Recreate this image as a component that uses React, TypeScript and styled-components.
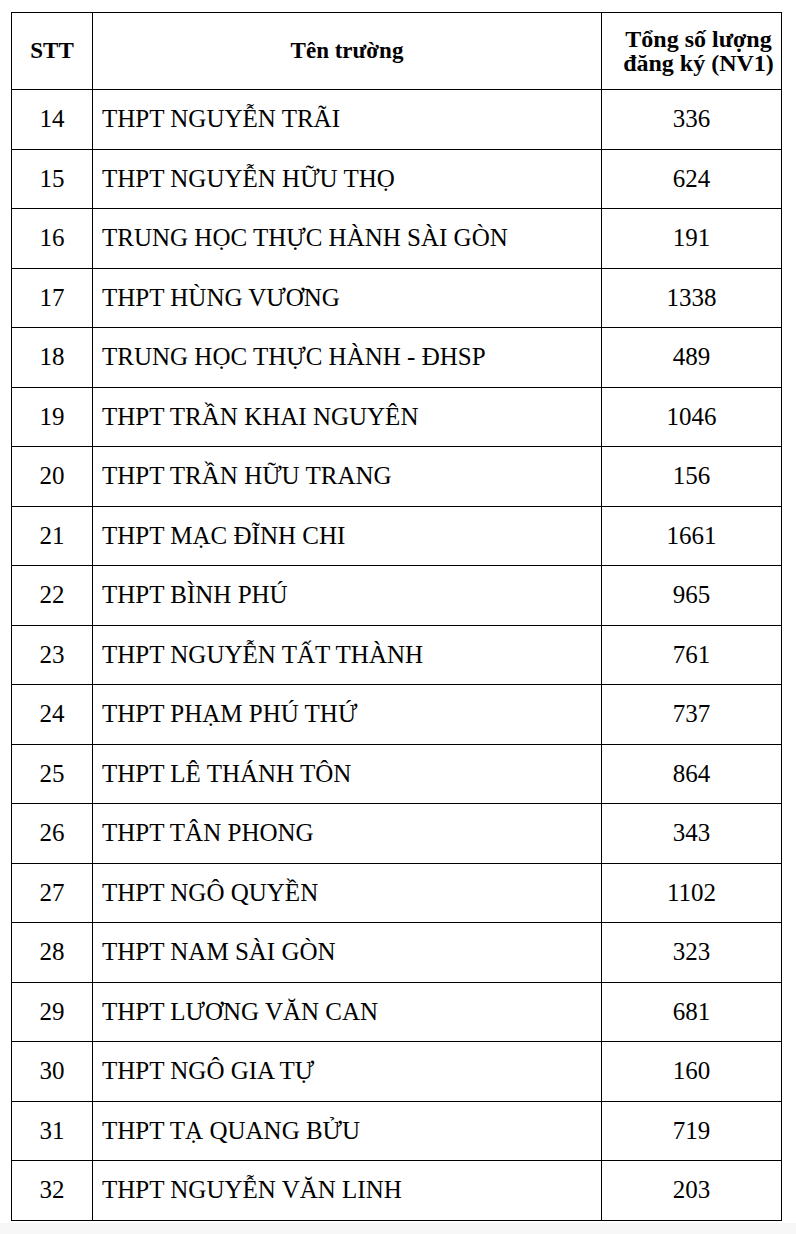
import React from "react";
import styled, { createGlobalStyle } from "styled-components";

const GlobalStyle = createGlobalStyle`
  body {
    margin: 0;
    background: #f7f7f7;
    font-family: "Liberation Serif", "Times New Roman", serif;
    color: #000;
  }
`;

const Page = styled.div`
  background: #fff;
  padding: 12px 0 2px 11px;
`;

const Table = styled.table`
  border-collapse: collapse;
  width: 770px;
  table-layout: fixed;
`;

const HeadCell = styled.th<{ $shift?: number; $size?: number }>`
  border: 1px solid #000;
  height: 76px;
  padding: 0 0 0 ${(p) => p.$shift ?? 0}px;
  font-size: ${(p) => p.$size ?? 23}px;
  font-weight: bold;
  line-height: 24px;
  text-align: center;
  vertical-align: middle;
  white-space: nowrap;
`;

const Cell = styled.td<{ $align?: "left" | "center" }>`
  border: 1px solid #000;
  height: 58.5px;
  padding: ${(p) => (p.$align === "left" ? "0 0 0 9px" : "0")};
  font-size: 25px;
  text-align: ${(p) => p.$align ?? "center"};
  vertical-align: middle;
  white-space: nowrap;
`;

const rows: [number, string, number][] = [
  [14, "THPT NGUYỄN TRÃI", 336],
  [15, "THPT NGUYỄN HỮU THỌ", 624],
  [16, "TRUNG HỌC THỰC HÀNH SÀI GÒN", 191],
  [17, "THPT HÙNG VƯƠNG", 1338],
  [18, "TRUNG HỌC THỰC HÀNH - ĐHSP", 489],
  [19, "THPT TRẦN KHAI NGUYÊN", 1046],
  [20, "THPT TRẦN HỮU TRANG", 156],
  [21, "THPT MẠC ĐĨNH CHI", 1661],
  [22, "THPT BÌNH PHÚ", 965],
  [23, "THPT NGUYỄN TẤT THÀNH", 761],
  [24, "THPT PHẠM PHÚ THỨ", 737],
  [25, "THPT LÊ THÁNH TÔN", 864],
  [26, "THPT TÂN PHONG", 343],
  [27, "THPT NGÔ QUYỀN", 1102],
  [28, "THPT NAM SÀI GÒN", 323],
  [29, "THPT LƯƠNG VĂN CAN", 681],
  [30, "THPT NGÔ GIA TỰ", 160],
  [31, "THPT TẠ QUANG BỬU", 719],
  [32, "THPT NGUYỄN VĂN LINH", 203],
];

function App() {
  return (
    <Page>
      <GlobalStyle />
      <Table>
        <colgroup>
          <col style={{ width: 81 }} />
          <col style={{ width: 509 }} />
          <col style={{ width: 180 }} />
        </colgroup>
        <thead>
          <tr>
            <HeadCell>STT</HeadCell>
            <HeadCell>Tên trường</HeadCell>
            <HeadCell $shift={14} $size={24}>
              Tổng số lượng
              <br />
              đăng ký (NV1)
            </HeadCell>
          </tr>
        </thead>
        <tbody>
          {rows.map(([stt, name, total]) => (
            <tr key={stt}>
              <Cell>{stt}</Cell>
              <Cell $align="left">{name}</Cell>
              <Cell>{total}</Cell>
            </tr>
          ))}
        </tbody>
      </Table>
    </Page>
  );
}

export default App;
